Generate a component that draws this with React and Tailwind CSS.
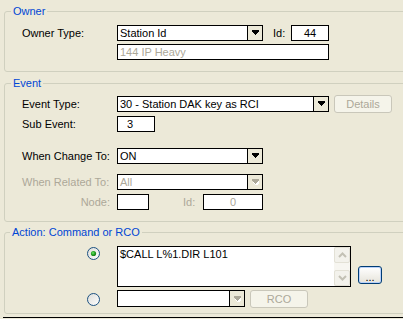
import React from "react";

function Arrow({ disabled }) {
  return (
    <svg width="7" height="6" viewBox="0 0 7 6" shapeRendering="crispEdges">
      {disabled && <path d="M1 1h7v2H1z M1 3h7L4.5 7z" fill="#ffffff" />}
      <path d="M0 0h7v2H0z M1 2h5v1H1z M2 3h3v1H2z M3 4h1v1H3z" fill={disabled ? "#aca899" : "#000000"} />
    </svg>
  );
}

function Combo({ className, text, disabled }) {
  return (
    <div className={`flex border border-black bg-white ${className}`}>
      <div className={`flex flex-1 items-center pl-[2px] ${disabled ? "text-[#aca899]" : "text-black"}`}>{text}</div>
      <div className="flex w-[15px] items-center justify-center border-l border-black bg-[#ece9d8]">
        <Arrow disabled={disabled} />
      </div>
    </div>
  );
}

function Radio({ checked }) {
  return (
    <svg width="13" height="13" viewBox="0 0 13 13">
      <defs>
        <linearGradient id={checked ? "rg1" : "rg2"} x1="0" y1="0" x2="1" y2="1">
          <stop offset="0" stopColor="#dcdcd7" />
          <stop offset="1" stopColor="#ffffff" />
        </linearGradient>
        <radialGradient id="dot" cx="0.4" cy="0.4" r="0.6">
          <stop offset="0" stopColor="#6fe86a" />
          <stop offset="0.6" stopColor="#21a121" />
          <stop offset="1" stopColor="#1a7a1a" />
        </radialGradient>
      </defs>
      <circle cx="6.5" cy="6.5" r="6" fill={`url(#${checked ? "rg1" : "rg2"})`} stroke="#1c5180" strokeWidth="1" />
      {checked && <circle cx="6.5" cy="6.5" r="2.6" fill="url(#dot)" />}
    </svg>
  );
}

function Chevron({ up }) {
  return (
    <svg width="9" height="6" viewBox="0 0 9 6">
      <path d={up ? "M1 5L4.5 1.5L8 5" : "M1 1L4.5 4.5L8 1"} stroke="#c3c1b5" strokeWidth="2" fill="none" />
    </svg>
  );
}

function DisabledButton({ className, children }) {
  return (
    <div className={`flex items-center justify-center rounded-[3px] border border-[#c9c7ba] bg-[#f5f4ea] text-[#aca899] ${className}`}>
      {children}
    </div>
  );
}

export default function App() {
  return (
    <div className="h-[319px] w-[403px] overflow-hidden bg-[#ece9d8] pl-[4px] pt-[4px] font-['Liberation_Sans',Arial,sans-serif] text-[11px] leading-[14px] text-black">
      {/* Owner */}
      <fieldset className="w-[420px] rounded-[3px] border border-[#d0d0bf] pb-[11px]">
        <legend className="ml-[6px] px-[2px] leading-[14px] text-[#0046d5]">Owner</legend>
        <div className="flex flex-col gap-[3px] pl-[17px] pt-[7px]">
          <div className="flex h-[16px] items-center">
            <div className="w-[95px]">Owner Type:</div>
            <Combo className="h-[16px] w-[146px]" text="Station Id" />
            <div className="ml-[10px] w-[18px]">Id:</div>
            <div className="flex h-[16px] w-[38px] items-center justify-center border border-black bg-white">44</div>
          </div>
          <div className="flex h-[16px] items-center">
            <div className="w-[95px]" />
            <div className="flex h-[16px] w-[212px] items-center border border-black bg-white pl-[2px] text-[#aca899]">144 IP Heavy</div>
          </div>
        </div>
      </fieldset>

      {/* Event */}
      <fieldset className="mt-[4px] w-[420px] rounded-[3px] border border-[#d0d0bf] pb-[11px]">
        <legend className="ml-[6px] px-[2px] leading-[14px] text-[#0046d5]">Event</legend>
        <div className="flex flex-col pl-[17px] pt-[5px]">
          <div className="flex h-[18px] items-center">
            <div className="w-[95px]">Event Type:</div>
            <Combo className="h-[16px] w-[212px]" text="30 - Station DAK key as RCI" />
            <DisabledButton className="ml-[5px] h-[18px] w-[58px]">Details</DisabledButton>
          </div>
          <div className="mt-[3px] flex h-[16px] items-center">
            <div className="w-[95px]">Sub Event:</div>
            <div className="flex h-[16px] w-[38px] items-center border border-black bg-white pl-[9px]">3</div>
          </div>
          <div className="mt-[16px] flex h-[16px] items-center">
            <div className="w-[95px]">When Change To:</div>
            <Combo className="h-[16px] w-[146px]" text="ON" />
          </div>
          <div className="mt-[10px] flex h-[16px] items-center">
            <div className="w-[95px] text-[#aca899]">When Related To:</div>
            <Combo className="h-[16px] w-[146px]" text="All" disabled />
          </div>
          <div className="mt-[4px] flex h-[16px] items-center">
            <div className="w-[95px] pr-[7px] text-right text-[#aca899]">Node:</div>
            <div className="h-[16px] w-[32px] border border-black bg-white" />
            <div className="ml-[34px] w-[20px] text-[#aca899]">Id:</div>
            <div className="flex h-[16px] w-[60px] items-center justify-center border border-black bg-white text-[#aca899]">0</div>
          </div>
        </div>
      </fieldset>

      {/* Action */}
      <fieldset className="mt-[3px] w-[420px] rounded-[3px] border border-[#d0d0bf] pb-[5px]">
        <legend className="ml-[5px] px-[2px] leading-[14px] text-[#0046d5]">Action: Command or RCO</legend>
        <div className="flex flex-col pl-[17px] pt-[7px]">
          <div className="flex items-start">
            <div className="w-[95px] pl-[65px] pt-[1px]">
              <Radio checked />
            </div>
            <div className="flex h-[41px] w-[234px] border border-black bg-white">
              <div className="flex-1 pl-[2px] pt-[1px] leading-[13px]">$CALL L%1.DIR L101</div>
              <div className="flex w-[16px] flex-col bg-[#f7f6f1]">
                <div className="flex h-[16px] items-center justify-center rounded-[2px] border border-[#e3e1d6] bg-[#f3f2ec]">
                  <Chevron up />
                </div>
                <div className="flex-1" />
                <div className="flex h-[16px] items-center justify-center rounded-[2px] border border-[#e3e1d6] bg-[#f3f2ec]">
                  <Chevron />
                </div>
              </div>
            </div>
            <div className="mb-[3px] ml-[7px] flex h-[18px] w-[24px] items-end justify-center self-end rounded-[3px] border border-[#003c74] bg-gradient-to-b from-white to-[#e6e4da] pb-[1px] leading-[10px] shadow-[inset_0_0_0_1px_#b9d1fa]">
              ...
            </div>
          </div>
          <div className="mt-[3px] flex h-[18px] items-start">
            <div className="w-[95px] pl-[65px] pt-[3px]">
              <Radio />
            </div>
            <Combo className="h-[17px] w-[128px]" text="" disabled />
            <DisabledButton className="ml-[5px] h-[18px] w-[58px]">RCO</DisabledButton>
          </div>
        </div>
      </fieldset>

      <div className="ml-[-1px] mt-[3px] h-[3px] w-[420px] border-t border-black bg-[#ece9d8]" />
    </div>
  );
}
